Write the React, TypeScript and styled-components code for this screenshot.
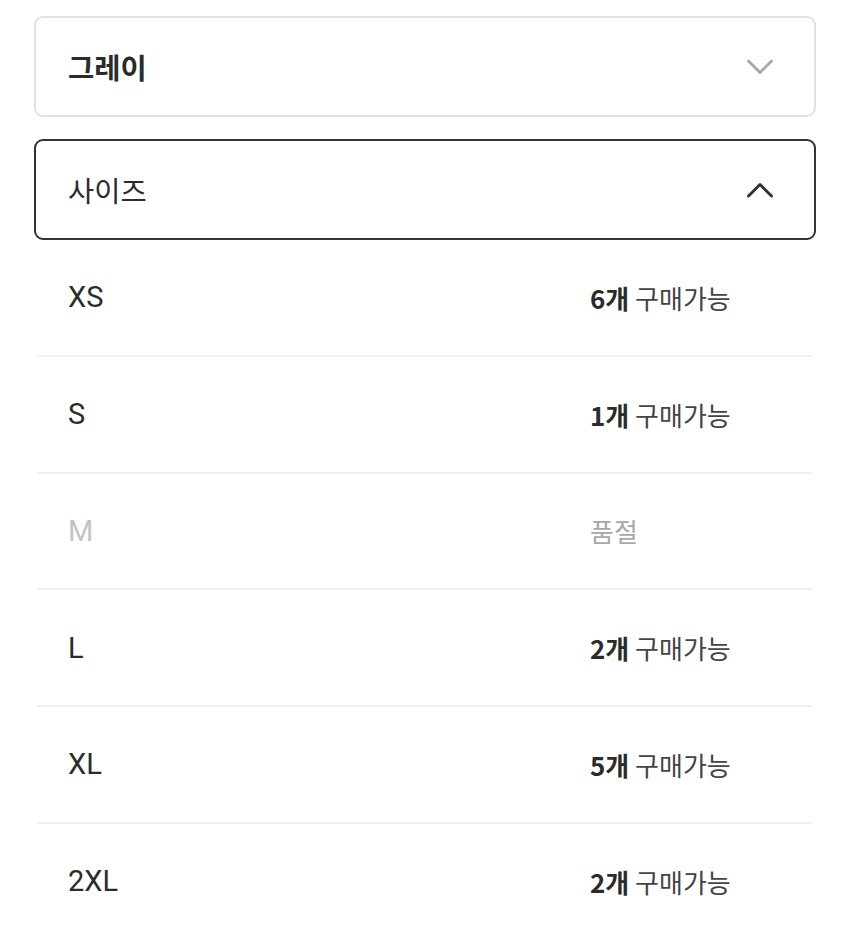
import React from "react";
import styled, { createGlobalStyle } from "styled-components";

const GlobalStyle = createGlobalStyle`
  html, body {
    margin: 0;
    padding: 0;
    background: #fff;
  }
  body {
    font-family: "Noto Sans CJK KR", "Noto Sans", sans-serif;
    color: #222;
  }
`;

const Page = styled.div`
  padding: 16px 34px 0;
  display: flex;
  flex-direction: column;
  gap: 22px;
`;

const SelectBox = styled.div<{ $open?: boolean }>`
  height: 101px;
  box-sizing: border-box;
  border: 2px solid ${(p) => (p.$open ? "#333" : "#e2e2e2")};
  border-radius: 9px;
  display: flex;
  align-items: center;
  justify-content: space-between;
  padding: 0 40px 0 32px;
`;

const SelectLabel = styled.span<{ $bold?: boolean }>`
  font-size: 28.5px;
  font-weight: ${(p) => (p.$bold ? 700 : 400)};
  color: #2b2b2b;
`;

const List = styled.ul`
  list-style: none;
  margin: -22px 4px 0 3px;
  padding: 0;
`;

const Row = styled.li`
  height: 114.75px;
  display: grid;
  grid-template-columns: 1fr 222px;
  align-items: center;
  padding-left: 31px;
  border-bottom: 2px solid #efefef;
  &:last-child {
    border-bottom: none;
  }
`;

const SizeName = styled.span<{ $soldOut?: boolean }>`
  font-family: "Roboto", "Noto Sans CJK KR", sans-serif;
  font-size: 29px;
  color: ${(p) => (p.$soldOut ? "#c4c4c4" : "#2b2b2b")};
`;

const Stock = styled.span<{ $soldOut?: boolean }>`
  font-size: 26px;
  color: ${(p) => (p.$soldOut ? "#a8a8a8" : "#444")};
  b {
    font-weight: 700;
    color: #2b2b2b;
  }
`;

const Chevron = ({ up, color }: { up?: boolean; color: string }) => (
  <svg width="28" height="18" viewBox="0 0 28 18" fill="none">
    <path
      d={up ? "M2.5 15 L14 3.5 L25.5 15" : "M2.5 3 L14 14.5 L25.5 3"}
      stroke={color}
      strokeWidth="3"
      strokeLinecap="round"
      strokeLinejoin="round"
    />
  </svg>
);

const sizes = [
  { name: "XS", count: 6 },
  { name: "S", count: 1 },
  { name: "M", count: 0 },
  { name: "L", count: 2 },
  { name: "XL", count: 5 },
  { name: "2XL", count: 2 },
];

export default function App() {
  return (
    <>
      <GlobalStyle />
      <Page>
        <SelectBox>
          <SelectLabel $bold>그레이</SelectLabel>
          <Chevron color="#aaaaaa" />
        </SelectBox>
        <SelectBox $open>
          <SelectLabel>사이즈</SelectLabel>
          <Chevron up color="#333" />
        </SelectBox>
        <List>
          {sizes.map((s) => (
            <Row key={s.name}>
              <SizeName $soldOut={s.count === 0}>{s.name}</SizeName>
              {s.count === 0 ? (
                <Stock $soldOut>품절</Stock>
              ) : (
                <Stock>
                  <b>{s.count}개</b> 구매가능
                </Stock>
              )}
            </Row>
          ))}
        </List>
      </Page>
    </>
  );
}
